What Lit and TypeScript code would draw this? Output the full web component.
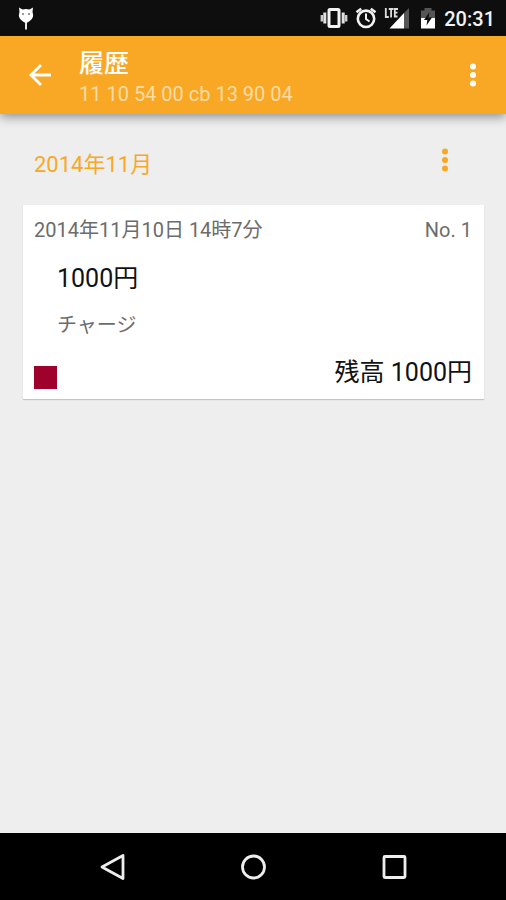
import { LitElement, html, css, svg } from "lit";
import { customElement, property } from "lit/decorators.js";

interface Entry {
  date: string;
  no: number;
  amount: string;
  kind: string;
  balance: string;
}

const entries: Entry[] = [
  { date: "2014年11月10日 14時7分", no: 1, amount: "1000円", kind: "チャージ", balance: "残高 1000円" },
];

const dots = svg`
  <circle cx="12" cy="3.500" r="3"/>
  <circle cx="12" cy="12" r="3"/>
  <circle cx="12" cy="20.500" r="3"/>`;

@customElement("status-bar")
class StatusBar extends LitElement {
  static styles = css`
    :host {
      display: flex;
      align-items: center;
      height: 36px;
      padding: 0 11px 0 16px;
      background: #0e0e0e;
      color: #f2f2f2;
      font-size: 20px;
      font-weight: 500;
      line-height: 36px;
    }
    svg { display: block; flex: none; }
    .grow { flex: 1; }
    .icons { display: flex; gap: 7px; margin-right: 5px; }
    .clock { padding-top: 2px; }
  `;
  render() {
    return html`
      <svg width="20" height="36" viewBox="0 0 20 36" fill="#fff" aria-hidden="true">
        <path d="M3 7.500 L6.500 9.500 Q10 8.600 13.500 9.500 L17 7.500 L16.500 12 Q18.600 18 13.700 21 Q11.500 22.600 10.900 22.700 L10.900 29.500 H9.100 L9.100 22.700 Q8.500 22.600 6.300 21 Q1.400 18 3.500 12 Z"/>
        <circle cx="7" cy="14" r="1" fill="#777"/>
        <circle cx="13" cy="14" r="1" fill="#777"/>
      </svg>
      <span class="grow"></span>
      <div class="icons">
        <svg width="28" height="36" viewBox="0 0 28 36" aria-hidden="true">
          <rect x="9" y="9.500" width="10" height="17" rx="1" fill="none" stroke="#f2f2f2" stroke-width="3"/>
          <path d="M1.800 15V21.500 M26.200 15V21.500" stroke="#ccc" stroke-width="2.400" fill="none"/>
          <path d="M4.800 12.500V23.500 M23.200 12.500V23.500" stroke="#e2e2e2" stroke-width="3" fill="none"/>
        </svg>
        <svg width="22" height="36" viewBox="0 0 22 36" fill="none" stroke="#f2f2f2" aria-hidden="true">
          <circle cx="11" cy="18.800" r="8.200" stroke-width="2.600"/>
          <path d="M11 13.500V19L14.500 21.500" stroke-width="2"/>
          <path d="M1.500 12.300L6.200 8.700 M20.500 12.300L15.800 8.700" stroke-width="2.600"/>
        </svg>
        <svg width="26" height="36" viewBox="0 0 26 36" aria-hidden="true">
          <path d="M25 8V28.500H20V13Z" fill="#555"/>
          <path d="M20 13V28.500H5.500Z" fill="#fff"/>
          <path d="M1.800 8V17H4.800 M4.800 9H9.500 M7.100 9V17.500 M14 9H10.800V16.500H13.500 M10.800 12.700H13.500" fill="none" stroke="#ddd" stroke-width="1.800"/>
        </svg>
        <svg width="22" height="36" viewBox="0 0 22 36" aria-hidden="true">
          <path d="M4 10.500H7.500V8H14.500V10.500H18V19H4Z" fill="#555"/>
          <path d="M4 18H18V28.500H4Z" fill="#fff"/>
          <path d="M12.500 12L7 20H10.300L9.500 25.500L15 17.500H11.500Z" fill="#0e0e0e"/>
        </svg>
      </div>
      <span class="clock">20:31</span>`;
  }
}

@customElement("app-header")
class AppHeader extends LitElement {
  @property() heading = "";
  @property() sub = "";
  static styles = css`
    :host {
      display: flex;
      align-items: center;
      height: 78px;
      padding: 0 9px 0 16px;
      background: #f9a825;
      color: #fff;
      box-shadow: 0 3px 10px rgba(0, 0, 0, 0.4);
      position: relative;
    }
    button {
      display: grid;
      place-items: center;
      width: 48px;
      height: 48px;
      padding: 0;
      border: 0;
      background: none;
      color: inherit;
    }
    svg { display: block; }
    .titles { flex: 1; min-width: 0; padding: 6px 0 0 15px; }
    h1 { margin: 0; font-size: 25px; font-weight: 500; line-height: 32px; }
    p { margin: 0; font-size: 20px; line-height: 28px; color: #fddca6; }
  `;
  render() {
    return html`
      <button aria-label="戻る">
        <svg width="24" height="24" viewBox="0 0 24 24" fill="none" stroke="currentColor" stroke-width="2.800">
          <path d="M23 12H3.500 M13 2L3 12L13 22"/>
        </svg>
      </button>
      <div class="titles">
        <h1>${this.heading}</h1>
        <p>${this.sub}</p>
      </div>
      <button aria-label="メニュー">
        <svg width="24" height="24" viewBox="0 0 24 24" fill="currentColor">${dots}</svg>
      </button>`;
  }
}

@customElement("history-card")
class HistoryCard extends LitElement {
  @property({ attribute: false }) entry!: Entry;
  static styles = css`
    :host {
      display: block;
      padding: 9px 12px 8px 11px;
      background: #fff;
      box-shadow: 0 1px 1px #c4c4c4;
      color: #111;
    }
    .row { display: flex; justify-content: space-between; align-items: center; }
    .small { font-size: 20px; line-height: 32px; color: #6c6c6c; }
    .body { padding-left: 23px; }
    .large { font-size: 25px; line-height: 36px; }
    .amount { padding: 15px 0 12px; }
    .foot { padding-top: 14px; align-items: flex-end; }
    .mark { width: 23px; height: 23px; margin-bottom: 2px; background: #a0002c; }
    p { margin: 0; }
  `;
  render() {
    const e = this.entry;
    return html`
      <div class="row small"><time>${e.date}</time><span>No. ${e.no}</span></div>
      <div class="body">
        <p class="large amount">${e.amount}</p>
        <p class="small">${e.kind}</p>
      </div>
      <div class="row foot">
        <span class="mark"></span>
        <span class="large">${e.balance}</span>
      </div>`;
  }
}

@customElement("nav-bar")
class NavBar extends LitElement {
  static styles = css`
    :host {
      display: flex;
      height: 67px;
      padding: 0 8%;
      background: #000;
      color: #eee;
    }
    button {
      flex: 1;
      display: grid;
      place-items: center;
      padding: 0;
      border: 0;
      background: none;
      color: inherit;
    }
    svg { display: block; }
  `;
  render() {
    const shapes = [
      { label: "戻る", shape: svg`<path d="M27 3.500V26.500L6 15Z"/>` },
      { label: "ホーム", shape: svg`<circle cx="15.500" cy="15" r="11"/>` },
      { label: "履歴", shape: svg`<rect x="4" y="4.500" width="21" height="21" rx="1"/>` },
    ];
    return shapes.map(
      (s) => html`<button aria-label=${s.label}>
        <svg width="30" height="30" viewBox="0 0 30 30" fill="none" stroke="currentColor" stroke-width="2.800" stroke-linejoin="round">${s.shape}</svg>
      </button>`
    );
  }
}

@customElement("app-root")
class AppRoot extends LitElement {
  static styles = css`
    :host {
      display: flex;
      flex-direction: column;
      min-height: 100vh;
      background: #eee;
      font-family: Roboto, "Noto Sans CJK JP", sans-serif;
    }
    main { flex: 1; padding: 22px 22px 24px 23px; }
    .month {
      display: flex;
      align-items: center;
      justify-content: space-between;
      height: 48px;
      padding: 0 15px 0 11px;
      margin-bottom: 21px;
      color: #f9a825;
    }
    h2 { margin: 0; padding-top: 10px; font-size: 22px; font-weight: 400; line-height: 32px; }
    button {
      display: grid;
      place-items: center;
      width: 48px;
      height: 48px;
      padding: 0;
      border: 0;
      background: none;
      color: inherit;
    }
  `;
  render() {
    return html`
      <status-bar></status-bar>
      <app-header heading="履歴" sub="11 10 54 00 cb 13 90 04"></app-header>
      <main>
        <div class="month">
          <h2>2014年11月</h2>
          <button aria-label="月のメニュー">
            <svg width="24" height="24" viewBox="0 0 24 24" fill="currentColor">${dots}</svg>
          </button>
        </div>
        ${entries.map((e) => html`<history-card .entry=${e}></history-card>`)}
      </main>
      <nav-bar></nav-bar>`;
  }
}
